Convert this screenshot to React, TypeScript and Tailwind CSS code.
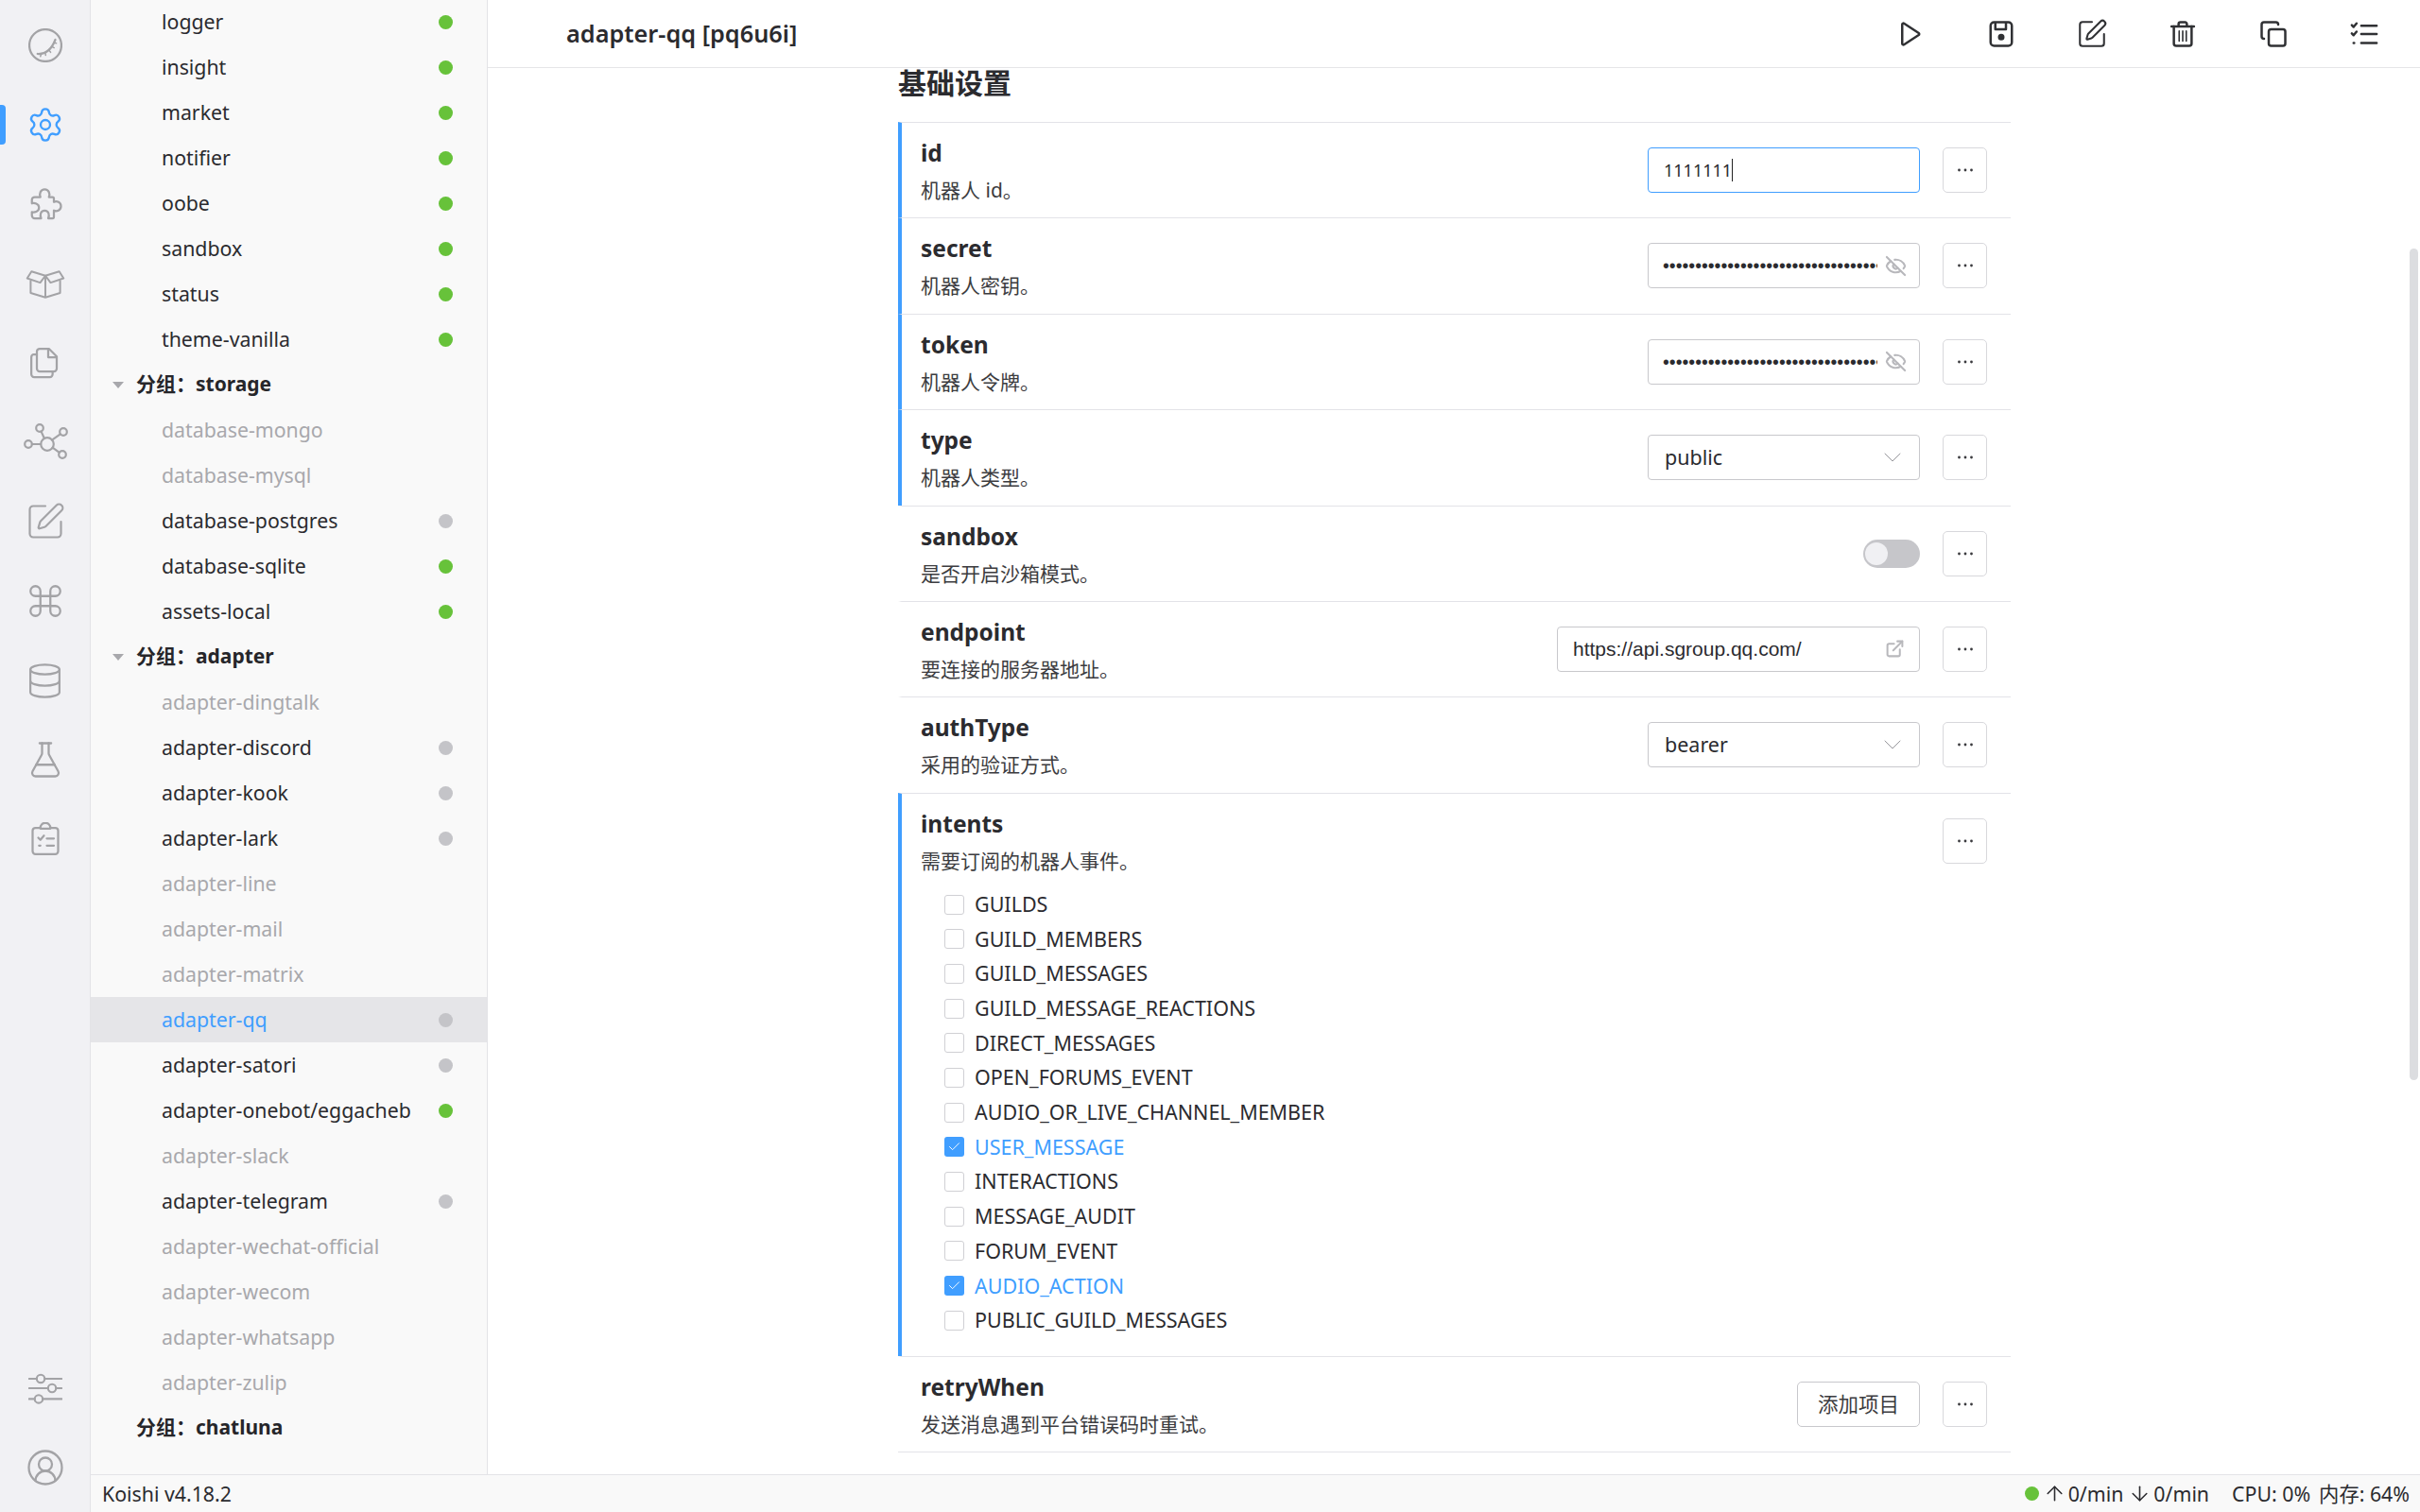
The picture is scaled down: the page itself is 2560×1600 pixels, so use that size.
import React from "react";
import { Settings, SquarePen, Command, Database, FlaskConical, CircleUserRound, Copy, EyeOff, ExternalLink, ChevronDown, Check, ArrowUp, ArrowDown } from "lucide-react";

const S = ({ children, className = "", size = 36, sw = 1.5 }: { children: React.ReactNode; className?: string; size?: number; sw?: number }) => (
  <svg width={size} height={size} viewBox="0 0 24 24" fill="none" stroke="currentColor" strokeWidth={sw} strokeLinecap="round" strokeLinejoin="round" className={className}>
    {children}
  </svg>
);
const Gauge = () => (
  <S>
    <circle cx="12" cy="12" r="11.3" />
    <path d="M6.5 18 Q15 18.5 19 8" />
    <path d="M9 18.3l-.5 1.5M12 17.5l.2 1.5M14.7 15.7l1 1.2M16.8 13l1.4.7M18.2 10.2l1.5.3" strokeWidth="1" />
  </S>
);
const PuzzleI = () => (
  <S>
    <path d="M2.5 9a2 2 0 0 1 2-2H8.5C7.5 5 8.5 1.5 11.5 1.5S15.5 5 14.5 7H17a1 1 0 0 1 1 1V10.5C20 9.5 23 10.5 23 13.5S20 17.5 18 16.5V21a1 1 0 0 1-1 1H14C15 20 14.5 16.5 11.5 16.5S8 20 9 22H4.5a2 2 0 0 1-2-2V17.5C4 18 7.5 17.5 7.5 14.5S4 11 2.5 11.5Z" />
  </S>
);
const Box = () => (
  <S size={44} sw={1.1}>
    <path d="M12 7.5L4 5 1.5 9l7.5 2.5zM12 7.5L20 5l2.5 4-7.5 2.5z" />
    <path d="M3.5 10.5v7L12 20l8.5-2.5v-7M12 7.5V20" />
  </S>
);
const Files = () => (
  <S>
    <path d="M8 2h6.5L20 7.5V16a2 2 0 0 1-2 2H8a2 2 0 0 1-2-2V4a2 2 0 0 1 2-2z" />
    <path d="M14 2.5V8h5.5" />
    <path d="M6 6H4a2 2 0 0 0-1.9 2V20a2 2 0 0 0 2 2h11a2 2 0 0 0 2-2v-2" />
  </S>
);
const Hub = () => (
  <S size={48} sw={1.1}>
    <circle cx="13" cy="13" r="3.4" />
    <circle cx="9" cy="4.5" r="1.9" />
    <circle cx="21.5" cy="6.5" r="1.9" />
    <circle cx="3" cy="13" r="1.9" />
    <circle cx="21" cy="18.5" r="1.9" />
    <path d="M9.8 6.3l1.6 3.6M19.9 7.7l-4.4 3.1M4.9 13h4.7M19.4 17.4l-3.6-2.6" />
  </S>
);
const Sliders = () => (
  <S sw={1.4}>
    <path d="M0.5 5.3H6M11.5 5.3H23.5M0.5 12H14M19.5 12H23.5M0.5 19.6H4.5M10 19.6H23.5" />
    <circle cx="8.7" cy="5.3" r="2.8" />
    <circle cx="16.7" cy="12" r="2.8" />
    <circle cx="7.3" cy="19.6" r="2.8" />
  </S>
);
const Clip = () => (
  <S>
    <rect x="3" y="4" width="18" height="18.5" rx="2" />
    <path d="M8.5 4.5h7v-.5a3.5 3.5 0 0 0-7 0z" fill="#f1f1f4" />
    <path d="M7 11l1.5 1.5 2.5-3M13 11.5H18M13 16.5H18M7.5 16.5h1" />
  </S>
);
const PlayI = () => (
  <S size={30} sw={2}>
    <path d="M5 3.8a1 1 0 0 1 1.5-.8L19 11.2a1 1 0 0 1 0 1.6L6.5 21a1 1 0 0 1-1.5-.8z" />
  </S>
);
const SaveI = () => (
  <S size={30} sw={2}>
    <rect x="3" y="2" width="18" height="20" rx="3" />
    <path d="M7 2.5V8h9V2.5" />
    <circle cx="12" cy="14.5" r="1.8" fill="currentColor" />
  </S>
);
const Trash = () => (
  <S size={30} sw={2}>
    <path d="M2.5 5.5h19M8.5 5V3.5a1.5 1.5 0 0 1 1.5-1.5h4a1.5 1.5 0 0 1 1.5 1.5V5" />
    <path d="M4.5 5.5V20a2 2 0 0 0 2 2h11a2 2 0 0 0 2-2V5.5" />
    <path d="M9 9.5v8.5M12 9.5v8.5M15 9.5v8.5" strokeWidth="1.3" />
  </S>
);
const Checks = () => (
  <S size={30} sw={2}>
    <path d="M1.5 4.5l1.5 1.5 2.5-3M1.5 11.5l1.5 1.5 2.5-3M9.5 5H22.5M9.5 12H22.5M9.5 19.5H22.5M3 19.5h.5" />
  </S>
);
const Dots = () => (
  <svg width="18" height="6" viewBox="0 0 18 6" fill="#3a3a3e"><circle cx="2.5" cy="3" r="1.4" /><circle cx="9" cy="3" r="1.4" /><circle cx="15.5" cy="3" r="1.4" /></svg>
);
const More = () => (
  <button className="w-[47px] h-[48px] shrink-0 border border-[#d8d8dc] rounded-[5px] bg-white flex items-center justify-center">
    <Dots />
  </button>
);

const sideItems: [string, number][] = [
  ["logger", 1], ["insight", 1], ["market", 1], ["notifier", 1], ["oobe", 1], ["sandbox", 1], ["status", 1], ["theme-vanilla", 1],
  ["分组：storage", 3],
  ["database-mongo", 0], ["database-mysql", 0], ["database-postgres", 2], ["database-sqlite", 1], ["assets-local", 1],
  ["分组：adapter", 3],
  ["adapter-dingtalk", 0], ["adapter-discord", 2], ["adapter-kook", 2], ["adapter-lark", 2], ["adapter-line", 0], ["adapter-mail", 0], ["adapter-matrix", 0],
  ["adapter-qq", 4], ["adapter-satori", 2], ["adapter-onebot/eggacheb", 1], ["adapter-slack", 0], ["adapter-telegram", 2],
  ["adapter-wechat-official", 0], ["adapter-wecom", 0], ["adapter-whatsapp", 0], ["adapter-zulip", 0],
  ["分组：chatluna", 5],
];

function SideRow({ name, kind }: { name: string; kind: number }) {
  if (kind === 3 || kind === 5) {
    return (
      <div className="h-[48px] shrink-0 flex items-center relative pl-[48px] font-bold text-[#26262a] text-[21px]">
        {kind === 3 && <span className="absolute left-[23px] top-[21px] w-0 h-0 border-x-[6px] border-x-transparent border-t-[7px] border-t-[#a8a8ac]" />}
        {name}
      </div>
    );
  }
  const color = kind === 0 ? "text-[#a8a8ac]" : kind === 4 ? "text-[#409eff]" : "text-[#2b2b2f]";
  return (
    <div className={`h-[48px] shrink-0 flex items-center pl-[75px] pr-[36px] justify-between text-[21.3px] ${color} ${kind === 4 ? "bg-[#e5e5e8]" : ""}`}>
      <span>{name}</span>
      {kind === 1 && <span className="w-[15px] h-[15px] rounded-full bg-[#67c23a]" />}
      {(kind === 2 || kind === 4) && <span className="w-[15px] h-[15px] rounded-full bg-[#c4c4c8]" />}
    </div>
  );
}

function Row({ title, desc, marked, children, tall }: { title: string; desc: string; marked?: boolean; children?: React.ReactNode; tall?: React.ReactNode }) {
  return (
    <div className={`border-t border-t-[#e3e3e8] border-l-[4px] ${marked ? "border-l-[#409eff]" : "border-l-transparent"} pl-[20px] pr-[25px] ${tall ? "h-[596px]" : "h-[101.4px]"}`}>
      <div className="flex items-start h-[100px] justify-between">
        <div className="pt-[12px]">
          <div className="text-[24.5px] font-bold leading-[39px] text-[#2b2b2f]">{title}</div>
          <div className="text-[21px] leading-[40px] text-[#3c3c40] whitespace-nowrap">{desc}</div>
        </div>
        <div className="flex items-center gap-[24px] h-[100px]">
          {children}
          <More />
        </div>
      </div>
      {tall}
    </div>
  );
}

const boxCls = "border border-[#c8c8cc] rounded-[4px] bg-white h-[48px] flex items-center text-[21.5px] text-[#2b2b2f]";
const Pwd = () => (
  <div className={`${boxCls} w-[288px] pl-[15px] pr-[13px]`}>
    <div className="flex-1 overflow-hidden whitespace-nowrap font-['Liberation_Sans',sans-serif] text-[19.5px] h-[26px] leading-[26px]">{"•".repeat(40)}</div>
    <EyeOff size={23} strokeWidth={2.2} className="text-[#b8b8bc] ml-[8px] shrink-0" />
  </div>
);
const Sel = ({ v }: { v: string }) => (
  <div className={`${boxCls} w-[288px] pl-[17px] pr-[12px] justify-between`}>
    <span>{v}</span>
    <ChevronDown size={32} strokeWidth={0.7} className="text-[#8f8f94]" />
  </div>
);

const intents: [string, boolean?][] = [
  ["GUILDS"], ["GUILD_MEMBERS"], ["GUILD_MESSAGES"], ["GUILD_MESSAGE_REACTIONS"], ["DIRECT_MESSAGES"], ["OPEN_FORUMS_EVENT"], ["AUDIO_OR_LIVE_CHANNEL_MEMBER"],
  ["USER_MESSAGE", true], ["INTERACTIONS"], ["MESSAGE_AUDIT"], ["FORUM_EVENT"], ["AUDIO_ACTION", true], ["PUBLIC_GUILD_MESSAGES"],
];

export default function App() {
  const rail = "text-[#a3a3a6] h-[84px] flex items-center justify-center";
  const cell = "w-[96px] flex justify-center";
  return (
    <div className="w-[2560px] h-[1600px] flex overflow-hidden bg-white font-['Noto_Sans','Noto_Sans_CJK_SC',sans-serif] text-[#2b2b2f]">
      <aside className="w-[96px] shrink-0 bg-[#f1f1f4] border-r border-r-[#e3e3e7] flex flex-col pt-[6px] pb-[5px] relative">
        <span className="absolute left-0 top-[111px] w-[6px] h-[42px] rounded-r-[4px] bg-[#409eff]" />
        <div className={rail}><Gauge /></div>
        <div className={`${rail} !text-[#409eff]`}><Settings size={40} strokeWidth={1.4} /></div>
        <div className={rail}><PuzzleI /></div>
        <div className={rail}><Box /></div>
        <div className={rail}><Files /></div>
        <div className={rail}><Hub /></div>
        <div className={rail}><SquarePen size={44} strokeWidth={1.2} /></div>
        <div className={rail}><Command size={42} strokeWidth={1.3} /></div>
        <div className={rail}><Database size={41} strokeWidth={1.3} /></div>
        <div className={rail}><FlaskConical size={42} strokeWidth={1.3} /></div>
        <div className={rail}><Clip /></div>
        <div className="flex-1" />
        <div className={rail}><Sliders /></div>
        <div className={rail}><CircleUserRound size={42} strokeWidth={1.3} /></div>
      </aside>
      <div className="flex-1 flex flex-col min-w-0">
        <div className="flex-1 flex min-h-0">
          <nav className="w-[420px] shrink-0 bg-[#f9f9f9] border-r border-r-[#e3e3e7] overflow-hidden flex flex-col -mt-px">
            {sideItems.map(([n, k]) => <SideRow key={n} name={n} kind={k} />)}
          </nav>
          <main className="flex-1 flex flex-col min-w-0 relative">
            <header className="h-[72px] shrink-0 border-b border-b-[#e5e5e8] flex items-center pl-[83px] pr-[11px] justify-between">
              <h1 className="text-[25.3px] font-semibold">adapter-qq [pq6u6i]</h1>
              <div className="flex items-center text-[#303134]">
                <div className={cell}><PlayI /></div>
                <div className={cell}><SaveI /></div>
                <div className={cell}><SquarePen size={34} strokeWidth={1.45} /></div>
                <div className={cell}><Trash /></div>
                <div className={cell}><Copy size={30} strokeWidth={2} /></div>
                <div className={cell}><Checks /></div>
              </div>
            </header>
            <div className="flex-1 overflow-hidden pl-[434px] w-[1611px]">
              <div className="h-[57px]">
                <h2 className="text-[30px] font-bold leading-[32px]">基础设置</h2>
              </div>
              <Row title="id" desc="机器人 id。" marked>
                <div className={`${boxCls} w-[288px] pl-[16px] !border-[#409eff] !text-[18px]`}>1111111<span className="w-px h-[24px] bg-[#222]" /></div>
              </Row>
              <Row title="secret" desc="机器人密钥。" marked><Pwd /></Row>
              <Row title="token" desc="机器人令牌。" marked><Pwd /></Row>
              <Row title="type" desc="机器人类型。" marked><Sel v="public" /></Row>
              <Row title="sandbox" desc="是否开启沙箱模式。">
                <div className="w-[60px] h-[30px] rounded-full bg-[#c6c6ca] relative">
                  <span className="absolute left-[2px] top-[3px] w-[24px] h-[24px] rounded-full bg-[#f0f0f3]" />
                </div>
              </Row>
              <Row title="endpoint" desc="要连接的服务器地址。">
                <div className={`${boxCls} w-[384px] pl-[16px] pr-[15px] justify-between font-['Liberation_Sans',sans-serif] !text-[21px]`}>
                  <span>https://api.sgroup.qq.com/</span>
                  <ExternalLink size={21} strokeWidth={2.3} className="text-[#b8b8bc]" />
                </div>
              </Row>
              <Row title="authType" desc="采用的验证方式。"><Sel v="bearer" /></Row>
              <Row title="intents" desc="需要订阅的机器人事件。" marked tall={
                <div className="pl-[25px] -mt-px flex flex-col">
                  {intents.map(([n, on]) => (
                    <div key={n} className={`h-[36.7px] flex items-center gap-[11px] text-[21.5px] ${on ? "text-[#409eff]" : "text-[#2b2b2f]"}`}>
                      <span className={`w-[21px] h-[21px] rounded-[3px] flex items-center justify-center ${on ? "bg-[#409eff]" : "border border-[#d0d0d4] bg-white"}`}>
                        {on && <Check size={15} strokeWidth={1.5} className="text-white" />}
                      </span>
                      {n}
                    </div>
                  ))}
                </div>
              } />
              <Row title="retryWhen" desc="发送消息遇到平台错误码时重试。">
                <button className="w-[130px] h-[48px] border border-[#c8c8cc] rounded-[5px] bg-white text-[21.5px] text-[#3c3c40]">添加项目</button>
              </Row>
              <div className="border-t border-t-[#e3e3e8]" />
            </div>
            <span className="absolute right-[2px] top-[263px] w-[9px] h-[880px] rounded-full bg-[#dcdde0]" />
          </main>
        </div>
        <footer className="h-[40px] shrink-0 border-t border-t-[#e3e3e7] bg-[#f9f9f9] flex items-center justify-between pl-[12px] pr-[11px] text-[21.3px]">
          <span>Koishi v4.18.2</span>
          <div className="flex items-center">
            <span className="w-[15px] h-[15px] rounded-full bg-[#67c23a] mr-[4px]" />
            <ArrowUp size={25} strokeWidth={1.5} className="mr-[2px]" />
            <span className="mr-[5px]">0/min</span>
            <ArrowDown size={25} strokeWidth={1.5} className="mr-[2px]" />
            <span className="mr-[24px]">0/min</span>
            <span className="mr-[9px]">CPU: 0%</span>
            <span>内存: 64%</span>
          </div>
        </footer>
      </div>
    </div>
  );
}
